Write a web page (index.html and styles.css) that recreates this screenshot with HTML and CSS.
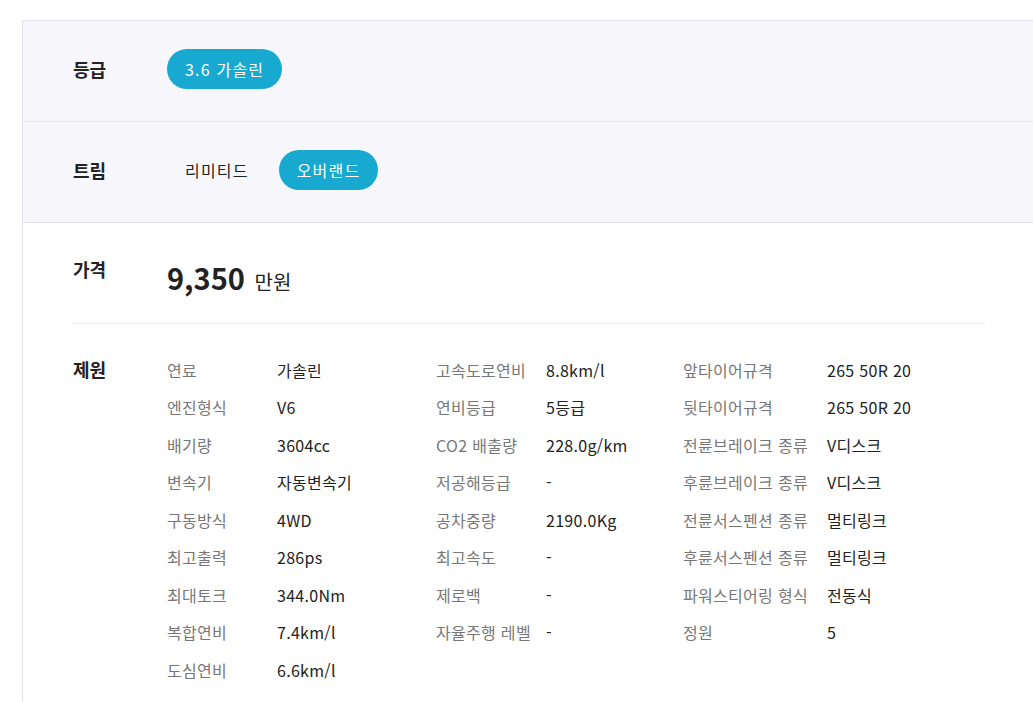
FILE: index.html
```html
<!DOCTYPE html>
<html lang="ko">
<head>
  <meta charset="UTF-8">
  <title>차량 제원</title>
  <link rel="stylesheet" href="styles.css">
</head>
<body>

  <div class="panel">
    <div class="option-row">
      <div class="row-label">등급</div>
      <div class="chips">
        <span class="chip active">3.6 가솔린</span>
      </div>
    </div>

    <div class="option-row">
      <div class="row-label">트림</div>
      <div class="chips">
        <span class="chip">리미티드</span>
        <span class="chip active">오버랜드</span>
      </div>
    </div>

    <div class="detail">
      <div class="price-row">
        <div class="row-label">가격</div>
        <div class="price"><strong>9,350</strong> 만원</div>
      </div>

      <div class="spec-row">
        <div class="row-label">제원</div>
        <div class="spec-cols">
          <dl class="spec">
            <dt>연료</dt><dd>가솔린</dd>
            <dt>엔진형식</dt><dd>V6</dd>
            <dt>배기량</dt><dd>3604cc</dd>
            <dt>변속기</dt><dd>자동변속기</dd>
            <dt>구동방식</dt><dd>4WD</dd>
            <dt>최고출력</dt><dd>286ps</dd>
            <dt>최대토크</dt><dd>344.0Nm</dd>
            <dt>복합연비</dt><dd>7.4km/l</dd>
            <dt>도심연비</dt><dd>6.6km/l</dd>
          </dl>
          <dl class="spec">
            <dt>고속도로연비</dt><dd>8.8km/l</dd>
            <dt>연비등급</dt><dd>5등급</dd>
            <dt>CO2 배출량</dt><dd>228.0g/km</dd>
            <dt>저공해등급</dt><dd>-</dd>
            <dt>공차중량</dt><dd>2190.0Kg</dd>
            <dt>최고속도</dt><dd>-</dd>
            <dt>제로백</dt><dd>-</dd>
            <dt>자율주행 레벨</dt><dd>-</dd>
          </dl>
          <dl class="spec wide">
            <dt>앞타이어규격</dt><dd>265 50R 20</dd>
            <dt>뒷타이어규격</dt><dd>265 50R 20</dd>
            <dt>전륜브레이크 종류</dt><dd>V디스크</dd>
            <dt>후륜브레이크 종류</dt><dd>V디스크</dd>
            <dt>전륜서스펜션 종류</dt><dd>멀티링크</dd>
            <dt>후륜서스펜션 종류</dt><dd>멀티링크</dd>
            <dt>파워스티어링 형식</dt><dd>전동식</dd>
            <dt>정원</dt><dd>5</dd>
          </dl>
        </div>
      </div>
    </div>
  </div>

</body>
</html>
```

FILE: styles.css
```css
body {
  margin: 0;
  padding: 20px 0 0 22px;
  font-family: "Noto Sans CJK KR", "Noto Sans", sans-serif;
  color: #222;
  background: #fff;
  overflow: hidden;
}

.panel {
  border-top: 1px solid #e3e3ec;
  border-left: 1px solid #e3e3ec;
}

.option-row {
  display: flex;
  align-items: center;
  height: 101px;
  padding: 0 50px 4px;
  box-sizing: border-box;
  background-color: #f7f7fb;
  border-bottom: 1px solid #e3e3ec;
}

.row-label {
  width: 94px;
  flex-shrink: 0;
  font-size: 18px;
  font-weight: bold;
  line-height: 24px;
}

.chips {
  display: flex;
  gap: 12px;
}

.chip {
  display: inline-block;
  height: 40px;
  line-height: 40px;
  padding: 0 18px;
  border-radius: 20px;
  font-size: 16px;
  letter-spacing: 1.2px;
  color: #222;
}

.chip.active {
  background-color: #17a9cf;
  color: #fff;
}

.detail {
  width: 912px;
  padding: 0 50px 40px;
}

.price-row {
  display: flex;
  align-items: flex-start;
  padding: 34px 0 21px;
  border-bottom: 1px solid #e8e8ee;
}

.price {
  font-size: 20px;
  line-height: 40px;
}

.price strong {
  font-size: 29px;
  margin-right: 4px;
}

.spec-row {
  display: flex;
  align-items: flex-start;
  padding-top: 27px;
}

.spec-row .row-label {
  line-height: 37.5px;
}

.spec-cols {
  display: grid;
  grid-template-columns: 269px 247px 1fr;
}

.spec {
  display: grid;
  grid-template-columns: 110px auto;
  grid-auto-rows: 37.5px;
  align-items: center;
  margin: 0;
  font-size: 16px;
  letter-spacing: 0.3px;
}

.spec.wide {
  grid-template-columns: 144px auto;
}

.spec dt {
  color: #777;
  white-space: nowrap;
}

.spec dd {
  margin: 0;
  color: #222;
  white-space: nowrap;
}
```
